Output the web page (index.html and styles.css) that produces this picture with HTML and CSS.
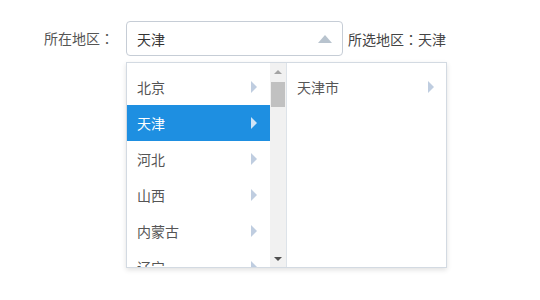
FILE: index.html
```html
<!DOCTYPE html>
<html>
<head>
<meta charset="utf-8">
<link rel="stylesheet" href="styles.css">
</head>
<body>
<div class="page">
<div class="row">
  <span class="label">所在地区<span class="colon">：</span></span>
  <div class="field">
    <span class="value">天津</span>
    <span class="caret"></span>
    <div class="dropdown">
      <div class="panel left">
        <ul class="list">
          <li class="item"><span>北京</span><i class="arr"></i></li>
          <li class="item active"><span>天津</span><i class="arr"></i></li>
          <li class="item"><span>河北</span><i class="arr"></i></li>
          <li class="item"><span>山西</span><i class="arr"></i></li>
          <li class="item"><span>内蒙古</span><i class="arr"></i></li>
          <li class="item"><span>辽宁</span><i class="arr"></i></li>
        </ul>
        <div class="scrollbar">
          <div class="sb-btn"><i class="sb-up"></i></div>
          <div class="sb-track"><div class="sb-thumb"></div></div>
          <div class="sb-btn"><i class="sb-down"></i></div>
        </div>
      </div>
      <div class="panel right">
        <ul class="list">
          <li class="item"><span>天津市</span><i class="arr"></i></li>
        </ul>
      </div>
    </div>
  </div>
  <span class="selected">所选地区<span class="colon">：</span>天津</span>
</div>
</div>
</body>
</html>
```

FILE: styles.css
```css
html, body {
  margin: 0;
  padding: 0;
  background: #fff;
}
body {
  font-family: "Noto Sans CJK SC", "Noto Sans", sans-serif;
  font-size: 14px;
  color: #555;
}
.page {
  height: 300px;
  position: relative;
}
.row {
  display: flex;
  align-items: center;
  padding: 21px 0 0 44px;
}
.colon {
  font-family: "Noto Sans CJK TC", "Noto Sans CJK SC", sans-serif;
}
.label {
  width: 82px;
  line-height: 35px;
}
.field {
  position: relative;
  box-sizing: border-box;
  width: 217px;
  height: 35px;
  border: 1px solid #c6cdd6;
  border-radius: 4px;
  display: flex;
  align-items: center;
  padding-left: 10px;
  color: #333;
}
.value { flex: 1; }
.caret {
  width: 0;
  height: 0;
  border-left: 7px solid transparent;
  border-right: 7px solid transparent;
  border-bottom: 8px solid #b8c3ce;
  margin-right: 10px;
}
.selected {
  margin-left: 5px;
  color: #444;
}
.dropdown {
  position: absolute;
  z-index: 10;
  top: 40px;
  left: -1px;
  display: flex;
  height: 206px;
  box-sizing: border-box;
  border: 1px solid #d3dae2;
  background: #fff;
  box-shadow: 0 2px 5px rgba(0,0,0,0.12);
  color: #555;
}
.panel {
  display: flex;
  height: 100%;
  overflow: hidden;
}
.panel.left {
  width: 159px;
  border-right: 1px solid #dde3e9;
}
.panel.right {
  width: 159px;
}
.list {
  list-style: none;
  margin: 0;
  padding: 6px 0 0;
  flex: 1;
}
.item {
  display: flex;
  align-items: center;
  justify-content: space-between;
  height: 36px;
  padding: 0 13px 0 10px;
}
.panel.right .item { padding-right: 12px; }
.item.active {
  background: #1e8fe1;
  color: #fff;
}
.arr {
  width: 0;
  height: 0;
  border-top: 6px solid transparent;
  border-bottom: 6px solid transparent;
  border-left: 6px solid #bfcde0;
}
.item.active .arr { border-left-color: #d0e4f6; }
.scrollbar {
  width: 16px;
  background: #f1f1f1;
  display: flex;
  flex-direction: column;
}
.sb-btn {
  height: 17px;
  display: flex;
  align-items: center;
  justify-content: center;
}
.sb-track {
  flex: 1;
}
.sb-thumb {
  margin: 2px 1px 0 1px;
  height: 25px;
  background: #c1c1c1;
}
.sb-up {
  width: 0; height: 0;
  border-left: 4px solid transparent;
  border-right: 4px solid transparent;
  border-bottom: 4px solid #a3a3a3;
}
.sb-down {
  width: 0; height: 0;
  border-left: 4px solid transparent;
  border-right: 4px solid transparent;
  border-top: 4px solid #505050;
}
```
